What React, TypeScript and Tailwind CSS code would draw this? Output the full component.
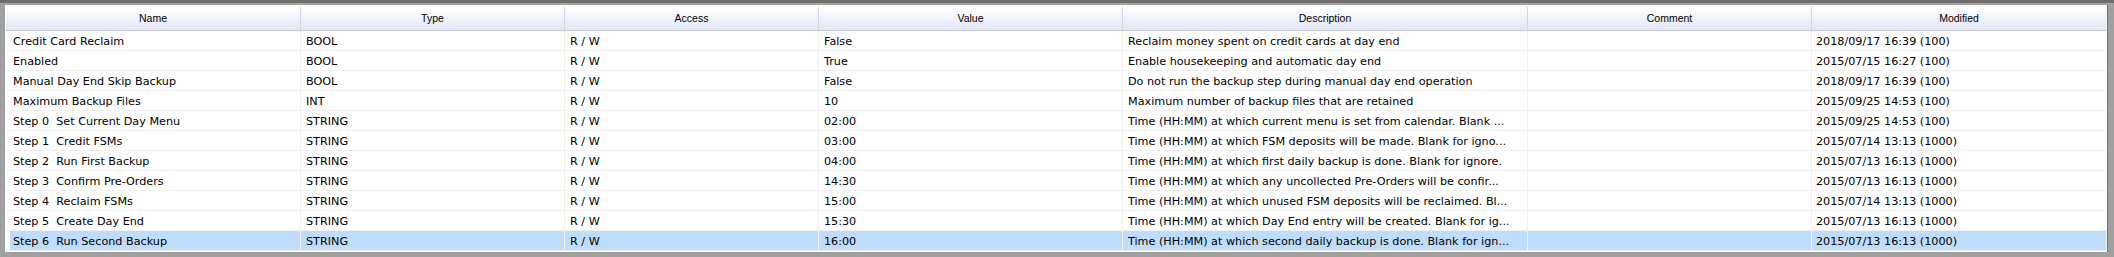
const columns = [
  { title: 'Name', w: 'w-[295px]', pad: 'pl-[7px]' },
  { title: 'Type', w: 'w-[264px]', pad: 'pl-[5px]' },
  { title: 'Access', w: 'w-[254px]', pad: 'pl-[5px]' },
  { title: 'Value', w: 'w-[304px]', pad: 'pl-[5px]' },
  { title: 'Description', w: 'w-[405px]', pad: 'pl-[5px]' },
  { title: 'Comment', w: 'w-[284px]', pad: 'pl-[5px]' },
  { title: 'Modified', w: 'w-[294px]', pad: 'pl-[4px]' },
];

const rows = [
  ['Credit Card Reclaim', 'BOOL', 'R / W', 'False', 'Reclaim money spent on credit cards at day end', '', '2018/09/17 16:39 (100)'],
  ['Enabled', 'BOOL', 'R / W', 'True', 'Enable housekeeping and automatic day end', '', '2015/07/15 16:27 (100)'],
  ['Manual Day End Skip Backup', 'BOOL', 'R / W', 'False', 'Do not run the backup step during manual day end operation', '', '2018/09/17 16:39 (100)'],
  ['Maximum Backup Files', 'INT', 'R / W', '10', 'Maximum number of backup files that are retained', '', '2015/09/25 14:53 (100)'],
  ['Step 0  Set Current Day Menu', 'STRING', 'R / W', '02:00', 'Time (HH:MM) at which current menu is set from calendar. Blank ...', '', '2015/09/25 14:53 (100)'],
  ['Step 1  Credit FSMs', 'STRING', 'R / W', '03:00', 'Time (HH:MM) at which FSM deposits will be made. Blank for igno...', '', '2015/07/14 13:13 (1000)'],
  ['Step 2  Run First Backup', 'STRING', 'R / W', '04:00', 'Time (HH:MM) at which first daily backup is done. Blank for ignore.', '', '2015/07/13 16:13 (1000)'],
  ['Step 3  Confirm Pre-Orders', 'STRING', 'R / W', '14:30', 'Time (HH:MM) at which any uncollected Pre-Orders will be confir...', '', '2015/07/13 16:13 (1000)'],
  ['Step 4  Reclaim FSMs', 'STRING', 'R / W', '15:00', 'Time (HH:MM) at which unused FSM deposits will be reclaimed. Bl...', '', '2015/07/14 13:13 (1000)'],
  ['Step 5  Create Day End', 'STRING', 'R / W', '15:30', 'Time (HH:MM) at which Day End entry will be created. Blank for ig...', '', '2015/07/13 16:13 (1000)'],
  ['Step 6  Run Second Backup', 'STRING', 'R / W', '16:00', 'Time (HH:MM) at which second daily backup is done. Blank for ign...', '', '2015/07/13 16:13 (1000)'],
];

const selectedRow = 10;

export default function App() {
  return (
    <div className="w-[2114px] h-[257px] bg-[#a0a0a0] border-t-[3px] border-[#6e6e6e] pt-[2px] pl-[5px] pr-[6px] pb-[5px]">
      <div className="h-full bg-white border-r border-[#6e6e6e] pt-[2px] px-[1px] overflow-hidden">
        {/* header */}
        <div className="flex h-[24px] border-b border-[#c3c6cf] bg-gradient-to-b from-white to-[#e2e6f6] font-['Liberation_Sans',sans-serif] text-[10.5px] text-black">
          {columns.map((c, i) => (
            <div
              key={c.title}
              className={`${c.w} shrink-0 flex items-center justify-center ${i < columns.length - 1 ? 'border-r border-[#d5d7de]' : ''}`}
            >
              {c.title}
            </div>
          ))}
        </div>

        {/* rows */}
        {rows.map((r, ri) => (
          <div key={ri} className="flex h-[20px] border-b border-[#f0f0f0] font-['DejaVu_Sans',sans-serif] text-[11.2px] text-black">
            {r.map((cell, ci) => (
              <div
                key={ci}
                className={`${columns[ci].w} ${columns[ci].pad} pt-[3px] shrink-0 flex items-center whitespace-pre overflow-hidden ${
                  ci < columns.length - 1 ? 'border-r border-[#f0f0f0]' : ''
                } ${ri === selectedRow ? 'bg-[#bfdcfb]' : ''} ${
                  ri === selectedRow && ci === 0 ? 'shadow-[inset_4px_0_0_white]' : ''
                }`}
              >
                {cell}
              </div>
            ))}
          </div>
        ))}
      </div>
    </div>
  );
}
